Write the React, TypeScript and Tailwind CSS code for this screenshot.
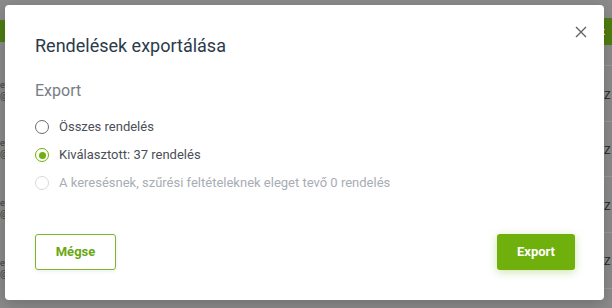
import React from "react";

function Radio({ checked, disabled, label }: { checked?: boolean; disabled?: boolean; label: string }) {
  return (
    <label className="flex items-center h-7 gap-[10px]">
      <span
        className={
          checked
            ? "w-[14px] h-[14px] rounded-full border-[1.5px] border-[#6fb00d] flex items-center justify-center"
            : disabled
            ? "w-[14px] h-[14px] rounded-full border-[1.5px] border-[#d6d9dd]"
            : "w-[14px] h-[14px] rounded-full border-[1.5px] border-[#6b6b6b]"
        }
      >
        {checked && <span className="w-[7px] h-[7px] rounded-full bg-[#6fb00d]" />}
      </span>
      <span className={disabled ? "text-[13px] text-[#a8adb5]" : "text-[13px] text-[#4a4f57]"}>{label}</span>
    </label>
  );
}

export default function App() {
  return (
    <div
      className="relative w-[612px] h-[308px] overflow-hidden bg-[#8b8b8b]"
      style={{ fontFamily: "Roboto, 'Noto Sans', sans-serif" }}
    >
      {/* page behind the overlay */}
      <div className="absolute left-0 top-[20px] w-[8px] h-[22px] bg-[#4f7d12]" />
      <div className="absolute right-0 top-[18px] w-[16px] h-[27px] bg-[#4f7d12] text-white text-[11px] font-bold leading-[27px] pl-[3px]">k</div>
      {[80, 138, 198, 258].map((t) => (
        <div key={t} className="absolute left-0 text-[9px] leading-[11px] text-[#3a3a3a]" style={{ top: t }}>
          <div>e</div>
          <div>@</div>
        </div>
      ))}
      {[65, 121, 176, 232, 288].map((t) => (
        <div key={t} className="absolute right-0 w-[10px] h-px bg-[#9a9a9a]" style={{ top: t }} />
      ))}
      {[90, 145, 201, 256].map((t) => (
        <div key={t} className="absolute right-0 w-[8px] text-[11px] text-[#222] leading-[12px]" style={{ top: t }}>
          Z
        </div>
      ))}

      {/* modal */}
      <div className="absolute left-[5px] top-[5px] w-[599px] h-[295px] bg-white rounded-[4px] shadow-[0_4px_16px_rgba(0,0,0,0.2)] pt-[29px] px-[30px] pb-[30px] flex flex-col">
        <button className="absolute right-[16px] top-[20px] w-[14px] h-[14px] flex items-center justify-center">
          <svg width="12" height="12" viewBox="0 0 12 12" fill="none" stroke="#5f6368" strokeWidth="1.4">
            <path d="M1 1L11 11M11 1L1 11" />
          </svg>
        </button>
        <h2 className="text-[18px] leading-6 text-[#2b3a4a] font-normal">Rendelések exportálása</h2>
        <div className="mt-[21px] text-[16px] leading-6 text-[#777d86]">Export</div>
        <div className="mt-[10px] flex flex-col">
          <Radio label="Összes rendelés" />
          <Radio checked label="Kiválasztott: 37 rendelés" />
          <Radio disabled label="A keresésnek, szűrési feltételeknek eleget tevő 0 rendelés" />
        </div>
        <div className="mt-auto flex justify-between">
          <button className="w-[81px] h-[36px] rounded-[3px] border border-[#7ab82a] text-[#6aa812] text-[13px] font-bold shadow-[0_1px_4px_rgba(0,0,0,0.08)]">
            Mégse
          </button>
          <button className="w-[78px] h-[36px] mr-[-1px] rounded-[3px] bg-[#6fb00d] text-white text-[13px] font-bold shadow-[0_2px_8px_rgba(111,176,13,0.35)]">
            Export
          </button>
        </div>
      </div>
    </div>
  );
}
